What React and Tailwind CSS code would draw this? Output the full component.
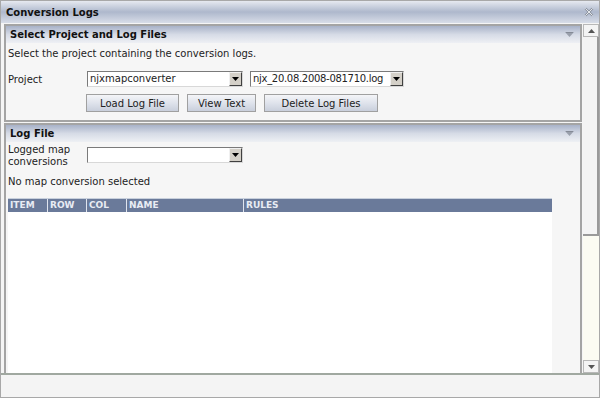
import React from 'react'

function Select({ value, className, textClass = '' }) {
  return (
    <div className={'flex h-[16px] items-stretch border border-t-[#7a7a7a] border-l-[#7a7a7a] border-r-[#d8d8d8] border-b-[#d8d8d8] bg-white ' + className}>
      <span className={'flex-1 overflow-hidden whitespace-nowrap pl-[2px] leading-[14px] ' + textClass}>{value}</span>
      <span className="flex w-[13px] items-center justify-center border border-t-[#f0f0f0] border-l-[#f0f0f0] border-r-[#404040] border-b-[#404040] bg-[#d4d0c8]">
        <svg width="7" height="4" viewBox="0 0 7 4"><path d="M0 0h7L3.5 4z" fill="#000" /></svg>
      </span>
    </div>
  )
}

function Btn({ children, className }) {
  return (
    <button className={'h-[18px] border border-[#a0a0a0] bg-gradient-to-b from-[#f4f5f8] via-[#dfe3ec] to-[#c9cfdc] text-[10px] text-[#222] ' + className}>
      {children}
    </button>
  )
}

function SectionHeader({ title }) {
  return (
    <div className="flex h-[17px] items-center justify-between bg-gradient-to-b from-[#a8b2c8] via-[#d6dbe6] to-[#eef0f4] pl-[4px] pr-[6px]">
      <span className="font-bold text-[#111]">{title}</span>
      <svg width="9" height="5" viewBox="0 0 9 5"><path d="M0 0h9L4.5 5z" fill="#9aa0ac" /><path d="M1 0h7" stroke="#6e7480" /></svg>
    </div>
  )
}

export default function App() {
  return (
    <div className="flex h-[398px] w-[600px] flex-col border border-[#a8a8a8] bg-[#f5f5f5] font-['DejaVu_Sans',sans-serif] text-[10px] text-[#222]">
      <div className="flex h-[22px] shrink-0 items-center justify-between bg-gradient-to-b from-[#e6e9f0] via-[#aeb8cc] to-[#d8dde8] pl-[5px] pr-[5px]">
        <span className="font-bold text-[#111]">Conversion Logs</span>
        <svg width="10" height="10" viewBox="0 0 10 10">
          <path d="M1.5 1.5l7 7M8.5 1.5l-7 7" stroke="#8c93a0" strokeWidth="2.4" />
          <path d="M1.5 1.5l7 7M8.5 1.5l-7 7" stroke="#eef0f4" strokeWidth="0.9" />
        </svg>
      </div>

      <div className="flex min-h-0 flex-1">
        <div className="flex min-w-0 flex-1 flex-col gap-[1px] pl-[3px] pr-[1px] pt-[1px]">
          <div className="flex h-[98px] shrink-0 flex-col border-2 border-[#a4a4a4]">
            <SectionHeader title="Select Project and Log Files" />
            <div className="flex flex-1 flex-col bg-[#f6f6f6] pl-[2px] pt-[4px]">
              <div className="leading-[14px]">Select the project containing the conversion logs.</div>
              <div className="mt-[10px] flex items-center">
                <span className="w-[79px]">Project</span>
                <Select value="njxmapconverter" className="w-[156px]" />
                <Select value="njx_20.08.2008-081710.log" className="ml-[7px] w-[154px]" textClass="tracking-[-0.3px]" />
              </div>
              <div className="mt-[7px] flex gap-[8px] pl-[78px]">
                <Btn className="w-[93px]">Load Log File</Btn>
                <Btn className="w-[69px]">View Text</Btn>
                <Btn className="w-[114px]">Delete Log Files</Btn>
              </div>
            </div>
          </div>

          <div className="flex min-h-0 flex-1 flex-col border-2 border-b-0 border-[#a4a4a4]">
            <SectionHeader title="Log File" />
            <div className="flex min-h-0 flex-1 flex-col bg-[#f6f6f6] pl-[2px]">
              <div className="flex items-start pt-[2px]">
                <span className="w-[79px] leading-[12px]">Logged map conversions</span>
                <Select value="" className="mt-[3px] w-[156px]" />
              </div>
              <div className="mt-[7px] leading-[14px]">No map conversion selected</div>
              <div className="mt-[9px] flex min-h-0 w-[544px] flex-1 flex-col bg-white">
                <div className="flex h-[14px] border-t border-[#c8d0dc] bg-[#6a7a9a] text-[9px] font-bold leading-[13px] text-[#e8ecf4]">
                  <span className="w-[40px] border-r border-[#dfe4ee] pl-[2px]">ITEM</span>
                  <span className="w-[39px] border-r border-[#dfe4ee] pl-[2px]">ROW</span>
                  <span className="w-[40px] border-r border-[#dfe4ee] pl-[2px]">COL</span>
                  <span className="w-[117px] border-r border-[#dfe4ee] pl-[2px]">NAME</span>
                  <span className="flex-1 pl-[2px]">RULES</span>
                </div>
                <div className="flex-1" />
              </div>
            </div>
          </div>
        </div>

        <div className="flex w-[16px] shrink-0 flex-col pt-[1px]">
          <div className="flex h-[13px] items-center justify-center border border-[#b8b8b8] bg-[#f4f4f4]">
            <svg width="7" height="4" viewBox="0 0 7 4"><path d="M3.5 0L7 4H0z" fill="#555" /></svg>
          </div>
          <div className="h-[199px] border-r-2 border-b-2 border-[#9a9a9a] bg-[#f4f4f4]" />
          <div className="flex-1 bg-[#fbfbf2]" />
          <div className="flex h-[13px] items-center justify-center border border-[#b8b8b8] bg-[#f4f4f4]">
            <svg width="7" height="4" viewBox="0 0 7 4"><path d="M0 0h7L3.5 4z" fill="#555" /></svg>
          </div>
        </div>
      </div>

      <div className="h-[24px] shrink-0 border-t-2 border-[#a0a8a0] bg-[#f4f4f4]" />
    </div>
  )
}
